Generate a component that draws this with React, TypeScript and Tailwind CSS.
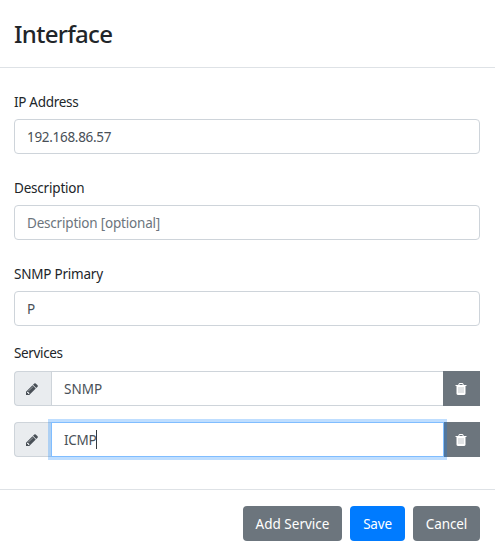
import React from 'react';

function Pencil() {
  return (
    <svg viewBox="0 0 1792 1792" className="mr-0.5 size-3.5 fill-[#495057]">
      <path d="M491 1536l91-91-235-235-91 91v107h128v128h107zm523-928q0-22-22-22-10 0-17 7l-542 542q-7 7-7 17 0 22 22 22 10 0 17-7l542-542q7-7 7-17zm-54-192l416 416-832 832h-416v-416zm683 96q0 53-37 90l-166 166-416-416 166-165q36-38 90-38 53 0 91 38l235 234q37 39 37 91z" />
    </svg>
  );
}

function Trash() {
  return (
    <svg viewBox="0 0 1792 1792" className="mr-px size-3.5 fill-white">
      <path d="M384 512h1024v960q0 64-64 64h-896q-64 0-64-64z" fill="#fff" fillOpacity="0.6" />
      <path d="M704 1376v-704q0-14-9-23t-23-9h-64q-14 0-23 9t-9 23v704q0 14 9 23t23 9h64q14 0 23-9t9-23zm256 0v-704q0-14-9-23t-23-9h-64q-14 0-23 9t-9 23v704q0 14 9 23t23 9h64q14 0 23-9t9-23zm256 0v-704q0-14-9-23t-23-9h-64q-14 0-23 9t-9 23v704q0 14 9 23t23 9h64q14 0 23-9t9-23zm-544-992h448l-48-117q-7-9-17-11h-317q-10 2-17 11zm928 32v64q0 14-9 23t-23 9h-96v948q0 83-47 143.5t-113 60.5h-832q-66 0-113-58.5t-47-141.5v-952h-96q-14 0-23-9t-9-23v-64q0-14 9-23t23-9h309l70-167q15-37 54-63t79-26h320q40 0 79 26t54 63l70 167h309q14 0 23 9t9 23z" />
    </svg>
  );
}

function Field({ label, value, muted, tracking = '' }: { label: React.ReactNode; value: string; muted?: boolean; tracking?: string }) {
  return (
    <div>
      <div className="mb-1.5 h-[22px] pt-px">{label}</div>
      <div className={`flex h-[35px] items-center rounded border border-[#ced4da] px-3 pt-0.5 ${muted ? 'text-[#6c757d]' : 'text-[#495057]'}`}>
        <span className={tracking}>{value}</span>
      </div>
    </div>
  );
}

function Service({ name, focused, tracking = '' }: { name: string; focused?: boolean; tracking?: string }) {
  return (
    <div className="flex h-[35px] text-[#495057]">
      <div className="flex w-[37px] items-center justify-center rounded-l border border-r-0 border-[#ced4da] bg-[#e9ecef]">
        <Pencil />
      </div>
      <div
        className={
          focused
            ? 'relative z-10 -mr-px flex flex-1 items-center border border-[#80bdff] bg-white px-3 pt-0.5 shadow-[0_0_0_3px_rgba(0,123,255,0.25)]'
            : 'flex flex-1 items-center border border-r-0 border-[#ced4da] bg-white px-3 pt-0.5'
        }
      >
        <span className={tracking}>{name}</span>
        {focused && <span className="-mt-0.5 h-[19px] w-px bg-[#343a40]" />}
      </div>
      <div className="flex w-[37px] items-center justify-center bg-[#6c757d]">
        <Trash />
      </div>
    </div>
  );
}

export default function App() {
  return (
    <div className="flex h-[553px] w-[495px] flex-col bg-white font-['Noto_Sans','Open_Sans',sans-serif] text-[13.5px] leading-[21px] whitespace-nowrap text-[#212529]">
      <header className="flex h-[68px] items-center border-b border-[#dee2e6] pl-[14px]">
        <h1 className="text-[24px] leading-[37px] font-medium tracking-[-0.7px]">Interface</h1>
      </header>
      <main className="flex flex-1 flex-col pt-[23px] pr-[15px] pl-[14px]">
        <div className="flex flex-col gap-[23px]">
          <Field label={<span className="tracking-[-0.3px]">IP Address</span>} value="192.168.86.57" tracking="tracking-[-0.3px]" />
          <Field label={<span className="tracking-[-0.2px]">Description</span>} value="Description [optional]" tracking="tracking-[-0.2px]" muted />
          <Field label={<span className="tracking-[-0.22px]">SNMP Primary</span>} value="P" />
        </div>
        <div className="mt-[17px] mb-[7px] h-[21px]">
          <span className="tracking-[-0.35px]">Services</span>
        </div>
        <div className="flex flex-col gap-4">
          <Service name="SNMP" />
          <Service name="ICMP" tracking="tracking-[-0.3px]" focused />
        </div>
      </main>
      <footer className="flex h-16 justify-end gap-2 border-t border-[#dee2e6] pt-4 pr-[15px] text-white">
        <button className="h-[35px] w-[99px] rounded bg-[#6c757d] pt-0.5">Add Service</button>
        <button className="h-[35px] w-[55px] rounded bg-[#007bff] pt-0.5 tracking-[-0.2px]">Save</button>
        <button className="h-[35px] w-[67px] rounded bg-[#6c757d] pt-0.5 tracking-[-0.1px]">Cancel</button>
      </footer>
    </div>
  );
}
